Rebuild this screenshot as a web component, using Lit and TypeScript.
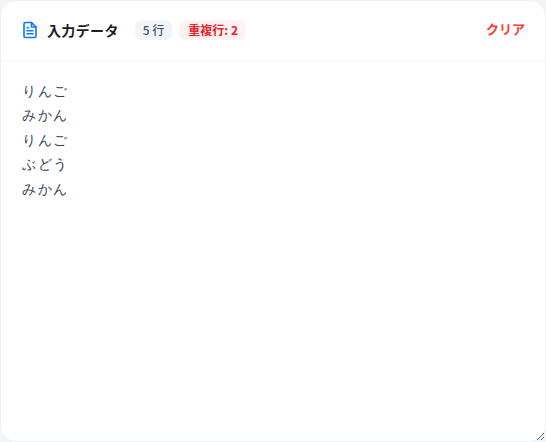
import { LitElement, html, css } from "lit";
import { customElement } from "lit/decorators.js";

const TEXT = "りんご\nみかん\nりんご\nぶどう\nみかん";

@customElement("app-root")
export class AppRoot extends LitElement {
  static styles = css`
    :host {
      display: block;
      width: 546px;
      height: 442px;
      background: #f1f5f9;
      font-family: "Noto Sans CJK JP", sans-serif;
    }
    .card {
      box-sizing: border-box;
      width: 546px;
      height: 442px;
      background: #fff;
      border: 1px solid #eef2f7;
      border-radius: 16px;
      display: flex;
      flex-direction: column;
    }
    .head {
      box-sizing: border-box;
      height: 60px;
      flex: none;
      border-bottom: 1px solid #f1f5f9;
      display: flex;
      align-items: center;
      padding: 0 20px 2px;
    }
    .title {
      display: flex;
      align-items: center;
      gap: 8px;
      font-size: 14px;
      font-weight: 700;
      letter-spacing: 0.35px;
      color: #1d1d1f;
    }
    .icon { width: 18px; height: 18px; flex: none; display: block; }
    .badges { display: flex; gap: 8px; margin-left: 16px; }
    .badge {
      font-size: 12px;
      font-weight: 500;
      line-height: 20px;
      padding: 0 8px;
      border-radius: 6px;
    }
    .neutral { background: #f1f5f9; color: #475569; }
    .dup { background: #fff0f1; color: #e5232b; font-weight: 700; }
    .clear {
      margin-left: auto;
      border: 0;
      background: none;
      padding: 0 0 2px;
      font: inherit;
      font-size: 13px;
      font-weight: 700;
      color: #ff3b30;
    }
    textarea {
      flex: 1;
      display: block;
      box-sizing: border-box;
      width: 100%;
      border: 0;
      outline: 0;
      margin: 0;
      padding: 18px 20px 18px 21px;
      resize: both;
      font-family: "Roboto", sans-serif;
      font-size: 14px;
      letter-spacing: 1.5px;
      line-height: 24.375px;
      color: #334155;
      background: transparent;
      border-radius: 0 0 16px 16px;
    }
  `;

  render() {
    return html`
      <div class="card">
        <div class="head">
          <div class="title">
            <svg class="icon" viewBox="0 0 24 24" fill="none" stroke="#0a7aff" stroke-width="2.2" stroke-linecap="round" stroke-linejoin="round">
              <path d="M14 2H6a2 2 0 0 0-2 2v16a2 2 0 0 0 2 2h12a2 2 0 0 0 2-2V8z"></path>
              <path d="M14 2v6h6"></path>
              <path d="M8 13h8"></path>
              <path d="M8 17h8"></path>
              <path d="M8 9h2"></path>
            </svg>
            <span>入力データ</span>
          </div>
          <div class="badges">
            <span class="badge neutral">5 行</span>
            <span class="badge dup">重複行: 2</span>
          </div>
          <button class="clear">クリア</button>
        </div>
        <textarea .value=${TEXT} spellcheck="false"></textarea>
      </div>
    `;
  }
}
